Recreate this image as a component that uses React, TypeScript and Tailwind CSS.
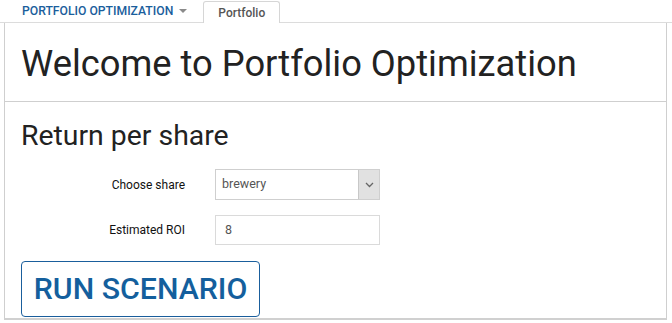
import React from "react";

export default function App() {
  return (
    <div className="w-[672px] h-[323px] bg-white overflow-hidden font-['Roboto',sans-serif] text-[#222]">
      {/* top nav */}
      <div className="flex items-end h-[23px] border-b border-[#dcdcdc]">
        <div className="flex items-center h-[22px] pl-[22px] text-[12.2px] font-medium text-[#1a5e9c]">
          <span>PORTFOLIO OPTIMIZATION</span>
          <svg className="ml-[6px]" width="8" height="5" viewBox="0 0 8 5">
            <path d="M0 0 L8 0 L4 4 Z" fill="#8a8a8a" />
          </svg>
        </div>
        <div className="ml-[16px] -mb-px h-[22px] w-[77px] flex items-center justify-center bg-white border border-b-0 border-[#d6d6d6] rounded-t-[3px] text-[12px] font-medium text-[#555]">
          Portfolio
        </div>
      </div>
      {/* panel */}
      <div className="ml-[4px] w-[663px] border-x border-[#cfcfcf] border-b-2 border-b-[#d0d0d0]">
        <div className="border-b border-[#cfcfcf] pl-[16px] pt-[21px] pb-[17px]">
          <h1 className="text-[36.3px] leading-[40px] font-normal text-[#222]">
            Welcome to Portfolio Optimization
          </h1>
        </div>
        <div className="pl-[16px] pt-[18px]">
          <h2 className="text-[28.4px] leading-[32px] font-normal text-[#222]">
            Return per share
          </h2>
          <div className="mt-[17px] flex flex-col gap-[15px]">
            <div className="flex items-center">
              <div className="w-[164px] text-right text-[12px] text-[#111]">
                Choose share
              </div>
              <div className="ml-[30px] w-[165px] h-[31px] border border-[#cfcfcf] flex">
                <div className="flex-1 flex items-center pl-[6px] text-[12.5px] text-[#555]">
                  brewery
                </div>
                <div className="w-[21px] h-full bg-[#e1e1e1] border-l border-[#c8c8c8] flex items-center justify-center">
                  <svg width="9" height="6" viewBox="0 0 9 6">
                    <path d="M1 1 L4.5 4.5 L8 1" fill="none" stroke="#666" strokeWidth="1.3" />
                  </svg>
                </div>
              </div>
            </div>
            <div className="flex items-center">
              <div className="w-[164px] text-right text-[12px] text-[#111]">
                Estimated ROI
              </div>
              <div className="ml-[30px] w-[165px] h-[30px] border border-[#dadada] flex items-center pl-[9px] text-[12.5px] text-[#555]">
                8
              </div>
            </div>
          </div>
          <div className="mt-[16px] mb-[1px]">
            <button className="w-[239px] h-[56px] border border-[#1a5e9c] rounded-[4px] bg-white text-[30.3px] font-medium text-[#145f9d] flex items-center justify-center">
              RUN SCENARIO
            </button>
          </div>
        </div>
      </div>
    </div>
  );
}
